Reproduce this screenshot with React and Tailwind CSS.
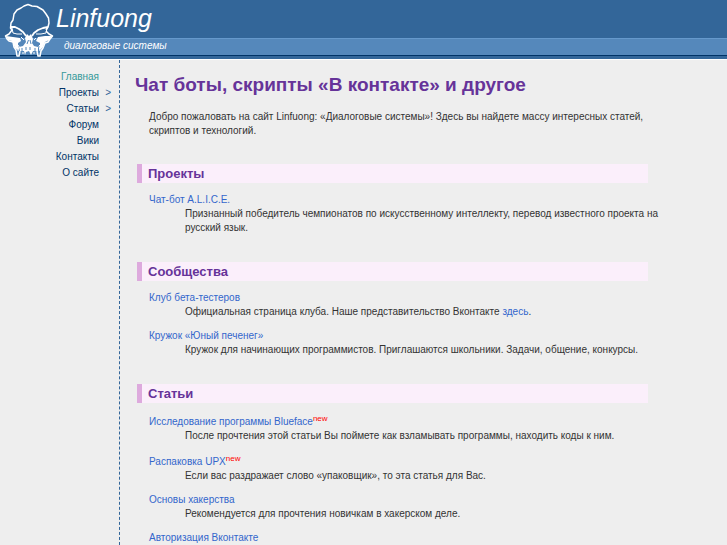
import React from 'react';

const menu = [
  { title: 'Главная', active: true },
  { title: 'Проекты', more: true },
  { title: 'Статьи', more: true },
  { title: 'Форум' },
  { title: 'Вики' },
  { title: 'Контакты' },
  { title: 'О сайте' },
];

const sections = [
  {
    title: 'Проекты',
    items: [
      {
        title: 'Чат-бот A.L.I.C.E.',
        text: 'Признанный победитель чемпионатов по искусственному интеллекту, перевод известного проекта на русский язык.',
      },
    ],
  },
  {
    title: 'Сообщества',
    items: [
      {
        title: 'Клуб бета-тестеров',
        text: (
          <>
            Официальная страница клуба. Наше представительство Вконтакте{' '}
            <a href="#club" className="text-[#3366cc]">здесь</a>.
          </>
        ),
      },
      {
        title: 'Кружок «Юный печенег»',
        text: 'Кружок для начинающих программистов. Приглашаются школьники. Задачи, общение, конкурсы.',
      },
    ],
  },
  {
    title: 'Статьи',
    items: [
      {
        title: 'Исследование программы Blueface',
        isNew: true,
        text: 'После прочтения этой статьи Вы поймете как взламывать программы, находить коды к ним.',
      },
      {
        title: 'Распаковка UPX',
        isNew: true,
        text: 'Если вас раздражает слово «упаковщик», то эта статья для Вас.',
      },
      {
        title: 'Основы хакерства',
        text: 'Рекомендуется для прочтения новичкам в хакерском деле.',
      },
      { title: 'Авторизация Вконтакте' },
    ],
  },
];

function Skull() {
  return (
    <svg viewBox="0 0 56 60" className="absolute left-0 top-0 h-[60px] w-14" fill="none" stroke="#fff" strokeLinejoin="round" aria-hidden="true">
      {/* dome */}
      <path strokeWidth="1.500" d="M12 30 L10.500 28 L11 23 L13 20 L14 14 L17 10 L21 8 L24 6 L28 4.500 L32 6 L37 6.500 L43 10 L46 14 L48.500 18 L49 23 L48 27 L46 30" />
      {/* brows */}
      <path strokeWidth="1.800" d="M11 27 L15 27 L19 29 L23 32 L26 36 M48 27 L43 28 L38 30 L34 33 L32 36" />
      <path strokeWidth="1" d="M12 28 L13 33 L17 34 L22 34 M47 28 L46 33 L41 34 L36 34" />
      {/* cheekbones */}
      <path strokeWidth="1.500" d="M12 30 L9 34 L5.500 36 L7 39 L9 41 L13 42 L14 47 L16 50 L17 56 L19 56 L20 51 M46 31 L49 34 L52.500 36 L50 39 L48 42 L45 43 L43 48 L41 51 L40 56 L38 56 L37 51" />
      <path fill="#fff" stroke="none" d="M6 36 L13 37 L20 38 L21 41 L18 43 L18 50 L15 48 L12 41 L8 40 Z M52 36 L45 36 L38 37 L36 41 L40 43 L40 50 L43 47 L45 42 L49 40 Z" />
      {/* nose and upper jaw */}
      <path fill="#fff" stroke="none" d="M27 34 L29 36 L31 34 L33 39 L32 43 L34 46 L38 47 L38 51 L33 51 L31 55 L29 51 L26 52 L25 55 L24 51 L20 51 L19 47 L23 46 L26 42 L25 38 Z" />
      <path stroke="#5588bb" strokeWidth="1" d="M28.500 40 L27 44 M30 40 L31 44 M22 48 V51 M26 47 V50 M30 47 V50 M35 48 V51" />
      {/* teeth */}
      <path strokeWidth="1" d="M16 44 L19 46 L18 51 M42 43 L39 46 L40 51 M22 53 H24 M33 53 H35 M21 37 L24 40 M36 38 L34 40" />
    </svg>
  );
}

function Header() {
  return (
    <header className="relative border-b border-white bg-[#336699] pb-[3px] italic text-white">
      <Skull />
      <div className="h-[38px] pl-14 text-[25px] leading-9">Linfuong</div>
      <div className="h-[18px] border-t border-b border-t-[#6699cc] border-b-[#003366] bg-[#5588bb] pl-16 text-[10px] leading-[14px]">
        диалоговые системы
      </div>
    </header>
  );
}

function Menu() {
  return (
    <nav className="w-[120px] shrink-0 border-r border-dashed border-r-[#336699] pt-[9px]">
      <ul>
        {menu.map((item) => (
          <li key={item.title} className="relative pr-5 text-right leading-4">
            <a href="#menu" className={item.active ? 'text-[#339999]' : 'text-[#003366]'}>
              {item.title}
            </a>
            {item.more && <span className="absolute right-2 text-[#336699]">&gt;</span>}
          </li>
        ))}
      </ul>
    </nav>
  );
}

function Section({ title, items }) {
  return (
    <section className="mb-[27px]">
      <h2 className="mr-[35px] ml-[2px] border-l-[5px] border-[#ddaadd] bg-[#fbeffb] pl-[6px] text-[13px] leading-[19px] font-bold text-[#663399]">
        {title}
      </h2>
      <dl className="mt-[10px] ml-[14px] flex flex-col gap-[10px]">
        {items.map((item) => (
          <div key={item.title}>
            <dt className={item.isNew ? 'pt-[2px] leading-[14px]' : 'leading-[14px]'}>
              <a href="#item" className="text-[#3366cc]">{item.title}</a>
              {item.isNew && <sup className="text-[8px] text-[#ff0000]">new</sup>}
            </dt>
            {item.text && <dd className="ml-9">{item.text}</dd>}
          </div>
        ))}
      </dl>
    </section>
  );
}

export default function App() {
  return (
    <div className="flex h-screen flex-col overflow-hidden bg-[#eeeeee] font-['Liberation_Sans',Arial,sans-serif] text-[10px] leading-[14px] text-[#333333]">
      <Header />
      <div className="flex min-h-0 flex-1">
        <Menu />
        <main className="min-w-0 flex-1 pr-11 pl-[15px]">
          <h1 className="mt-3 text-[19px] leading-[26px] font-bold text-[#663399]">
            Чат боты, скрипты «В контакте» и другое
          </h1>
          <p className="mt-3 mb-[26px] ml-[14px]">
            Добро пожаловать на сайт Linfuong: «Диалоговые системы»! Здесь вы найдете массу интересных статей, скриптов и технологий.
          </p>
          {sections.map((section) => (
            <Section key={section.title} {...section} />
          ))}
        </main>
      </div>
    </div>
  );
}
